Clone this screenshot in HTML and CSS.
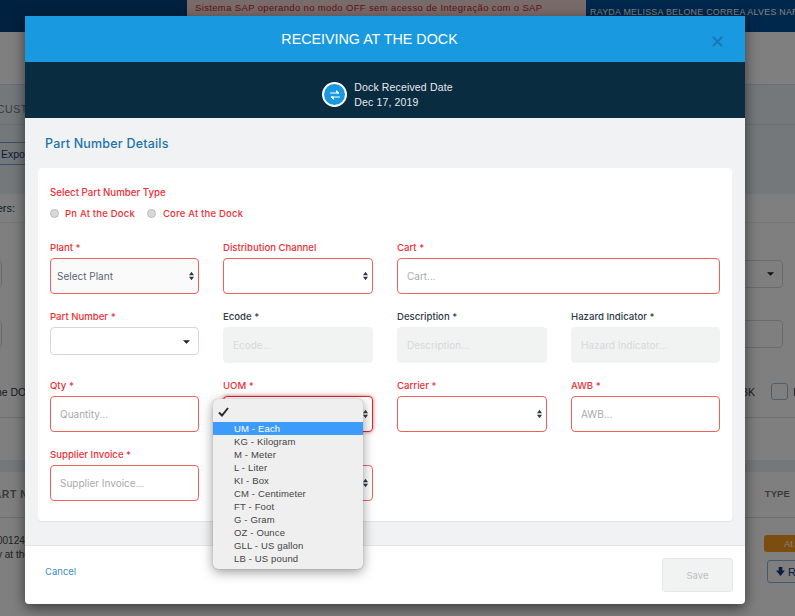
FILE: index.html
```html
<!DOCTYPE html>
<html lang="en">
<head>
  <meta charset="UTF-8" />
  <title>Receiving at the Dock</title>
  <link rel="stylesheet" href="styles.css">
</head>
<body>

  <!-- page behind the modal -->
  <div class="page">
    <div class="topbar">
      <div class="topbar-left"></div>
      <div class="topbar-alert">Sistema SAP operando no modo OFF sem acesso de Integração com o SAP</div>
      <div class="topbar-user">RAYDA MELISSA BELONE CORREA ALVES NARDI</div>
    </div>
    <div class="page-gap"></div>
    <div class="tabs">CUSTOMER</div>
    <div class="actions"><span class="export-btn">Export</span></div>
    <div class="filter-title">Filters:</div>
    <div class="filters">
      <div class="filter-row filter-row-first">
        <span class="filter-box filter-box-left"></span>
        <span class="filter-box filter-box-right">
          <svg class="caret-down" viewBox="0 0 8 4"><path d="M0 0h8L4 4z" /></svg>
        </span>
      </div>
      <div class="filter-row filter-row-second">
        <span class="filter-box filter-box-left"></span>
        <span class="filter-box filter-box-right"></span>
      </div>
      <div class="filter-row filter-row-third">
        <span class="filter-text">the DOCK</span>
        <span class="filter-check">
          <span class="filter-text">BK</span>
          <span class="checkbox"></span>
          <span class="filter-text">I</span>
        </span>
      </div>
    </div>
    <div class="band"></div>
    <div class="table-head">
      <span class="head-part">PART N</span>
      <span class="head-type">TYPE</span>
    </div>
    <div class="table-row">
      <div class="row-text">
        <div>00124</div>
        <div>y at the</div>
      </div>
      <div class="row-side">
        <span class="status">At the</span>
        <span class="receive-btn">
          <svg class="receive-icon" viewBox="0 0 10 10"><path d="M3 0h4v4h3L5 10 0 4h3z" /></svg>Receive
        </span>
      </div>
    </div>
  </div>

  <div class="backdrop"></div>

  <div class="modal">
    <div class="modal-header">
      <h1>RECEIVING AT THE DOCK</h1>
      <svg class="close-icon" viewBox="0 0 11 11"><path d="M1 1l9 9M10 1l-9 9" /></svg>
    </div>

    <div class="modal-info">
      <span class="info-icon">
        <svg viewBox="0 0 12 10"><path d="M1 3h9M7.500 .8L10 3H7.500zM11 7H2M4.500 9.200L2 7h2.500z" /></svg>
      </span>
      <div class="info-text">
        <div>Dock Received Date</div>
        <div>Dec 17, 2019</div>
      </div>
    </div>

    <div class="modal-body">
      <h2>Part Number Details</h2>
      <div class="card">
        <div class="type-label">Select Part Number Type</div>
        <div class="radios">
          <span class="radio"></span><span class="radio-label">Pn At the Dock</span>
          <span class="radio"></span><span class="radio-label">Core At the Dock</span>
        </div>

        <div class="form-grid">
          <div class="field">
            <div class="label error">Plant *</div>
            <div class="control invalid select-grey">Select Plant<svg class="updown" viewBox="0 0 6 10"><path d="M3 0l3 4H0zM3 10L0 6h6z" /></svg></div>
          </div>
          <div class="field">
            <div class="label error">Distribution Channel</div>
            <div class="control invalid"><svg class="updown" viewBox="0 0 6 10"><path d="M3 0l3 4H0zM3 10L0 6h6z" /></svg></div>
          </div>
          <div class="field field-wide">
            <div class="label error">Cart *</div>
            <div class="control invalid placeholder">Cart...</div>
          </div>

          <div class="field">
            <div class="label error">Part Number *</div>
            <div class="control control-short"><svg class="caret-down" viewBox="0 0 8 4"><path d="M0 0h8L4 4z" /></svg></div>
          </div>
          <div class="field">
            <div class="label">Ecode *</div>
            <div class="control disabled">Ecode...</div>
          </div>
          <div class="field">
            <div class="label">Description *</div>
            <div class="control disabled">Description...</div>
          </div>
          <div class="field">
            <div class="label">Hazard Indicator *</div>
            <div class="control disabled">Hazard Indicator...</div>
          </div>

          <div class="field">
            <div class="label error">Qty *</div>
            <div class="control invalid placeholder">Quantity...</div>
          </div>
          <div class="field">
            <div class="label error">UOM *</div>
            <div class="control invalid focused"><svg class="updown" viewBox="0 0 6 10"><path d="M3 0l3 4H0zM3 10L0 6h6z" /></svg></div>
            <ul class="menu">
              <li class="menu-check"><svg viewBox="0 0 11 10"><path d="M1 5.500l3 3L10 1" /></svg></li>
              <li class="active">UM - Each</li>
              <li>KG - Kilogram</li>
              <li>M - Meter</li>
              <li>L - Liter</li>
              <li>KI - Box</li>
              <li>CM - Centimeter</li>
              <li>FT - Foot</li>
              <li>G - Gram</li>
              <li>OZ - Ounce</li>
              <li>GLL - US gallon</li>
              <li>LB - US pound</li>
            </ul>
          </div>
          <div class="field">
            <div class="label error">Carrier *</div>
            <div class="control invalid"><svg class="updown" viewBox="0 0 6 10"><path d="M3 0l3 4H0zM3 10L0 6h6z" /></svg></div>
          </div>
          <div class="field">
            <div class="label error">AWB *</div>
            <div class="control invalid placeholder">AWB...</div>
          </div>

          <div class="field">
            <div class="label error">Supplier Invoice *</div>
            <div class="control invalid placeholder">Supplier Invoice...</div>
          </div>
          <div class="field">
            <div class="label error">&nbsp;</div>
            <div class="control invalid"><svg class="updown" viewBox="0 0 6 10"><path d="M3 0l3 4H0zM3 10L0 6h6z" /></svg></div>
          </div>
        </div>
      </div>
    </div>

    <div class="modal-footer">
      <a class="cancel">Cancel</a>
      <span class="save-btn">Save</span>
    </div>
  </div>

</body>
</html>
```

FILE: styles.css
```css
* {
  box-sizing: border-box;
}

html, body {
  margin: 0;
  height: 616px;
  overflow: hidden;
}

body {
  font-family: "Liberation Sans", Arial, sans-serif;
  background: #fff;
  color: #2e3a46;
  position: relative;
}

/* background page */
.page {
  height: 616px;
  overflow: hidden;
}

.topbar {
  display: flex;
  height: 32px;
  background: #005099;
}

.topbar-left {
  width: 187px;
  background: #00427e;
}

.topbar-alert {
  width: 399px;
  background: #f5d6d6;
  color: #c2262e;
  font-size: 9.500px;
  letter-spacing: .35px;
  padding: 2px 0 0 8px;
  white-space: nowrap;
}

.topbar-user {
  flex: 1;
  color: #fff;
  font-size: 8.800px;
  letter-spacing: .3px;
  padding: 7px 0 0 4px;
  white-space: nowrap;
  overflow: hidden;
}

.page-gap {
  height: 52px;
}

.tabs {
  height: 41px;
  background: #e9f1f5;
  border-top: 1px solid #d4dce2;
  border-bottom: 1px solid #d4dce2;
  color: #777;
  font-size: 10.500px;
  letter-spacing: .5px;
  padding: 18px 0 0 0;
  text-indent: -3px;
}

.actions {
  height: 69px;
  background: #e9f1f5;
  padding-top: 17px;
}

.export-btn {
  display: block;
  width: 90px;
  height: 23px;
  margin-left: -55px;
  padding: 5px 0 0 55px;
  border: 1px solid #7c9fd0;
  border-radius: 3px;
  color: #123a7c;
  font-size: 10.500px;
}

.filter-title {
  height: 29px;
  border-bottom: 1px solid #eee;
  font-size: 11px;
  padding-top: 8px;
  text-indent: -18px;
}

.filters {
  height: 195px;
  border-bottom: 1px solid #ddd;
}

.filter-row {
  display: flex;
  justify-content: space-between;
  align-items: center;
}

.filter-row-first {
  padding-top: 37px;
}

.filter-row-second {
  padding-top: 32px;
}

.filter-row-third {
  padding-top: 35px;
}

.filter-box {
  display: block;
  height: 28px;
  border: 1px solid #d3d8de;
  border-radius: 4px;
  position: relative;
}

.filter-box-left {
  width: 30px;
  margin-left: -28px;
}

.filter-box-right {
  width: 60px;
  margin-right: 12px;
}

.filter-box .caret-down {
  right: 8px;
  top: 11px;
}

.filter-text {
  font-size: 10.500px;
  white-space: nowrap;
}

.filter-row-third > .filter-text {
  margin-left: -7px;
}

.filter-check {
  display: flex;
  align-items: center;
  margin-right: -1px;
}

.checkbox {
  width: 17px;
  height: 17px;
  margin: 0 5px 0 16px;
  border: 1px solid #a9bacd;
  border-radius: 3px;
}

.band {
  height: 42px;
  position: relative;
}

.band::after {
  content: "";
  position: absolute;
  left: 0;
  right: 0;
  bottom: -12px;
  height: 12px;
  background: #e9f1f5;
}

.table-head {
  display: flex;
  justify-content: space-between;
  height: 58px;
  padding-top: 28px;
  border-bottom: 1px solid #ddd;
  color: #777;
  font-size: 10.500px;
  font-weight: bold;
  letter-spacing: .5px;
}

.head-part {
  margin-left: -13px;
}

.head-type {
  margin-right: 5px;
  font-size: 9.500px;
  letter-spacing: .1px;
}

.table-row {
  display: flex;
  justify-content: space-between;
}

.row-text {
  font-size: 10px;
  line-height: 14px;
  padding-top: 16px;
  margin-left: -3px;
  color: #444;
}

.row-side {
  width: 31px;
  padding-top: 17px;
  overflow: hidden;
}

.status {
  display: block;
  width: 60px;
  height: 17px;
  border-radius: 3px;
  background: #f79a1f;
  color: #fff;
  font-size: 9.500px;
  padding: 3px 0 0 20px;
  white-space: nowrap;
}

.receive-btn {
  display: block;
  width: 60px;
  height: 23px;
  margin: 8px 0 0 3px;
  padding: 5px 0 0 8px;
  border: 1px solid #8fb0db;
  border-radius: 3px;
  color: #0f3d88;
  font-size: 11px;
  white-space: nowrap;
}

.receive-icon {
  width: 9px;
  height: 9px;
  margin-right: 3px;
  fill: #0f3d88;
}

.backdrop {
  position: absolute;
  inset: 0;
  background: rgba(0, 0, 0, .5);
}

/* modal */
.modal {
  position: absolute;
  left: 25px;
  top: 16px;
  width: 720px;
  height: 588px;
  background: #fff;
  border-radius: 0 0 4px 4px;
  box-shadow: 0 4px 14px rgba(0, 0, 0, .55);
  display: flex;
  flex-direction: column;
}

.modal-header {
  height: 46px;
  flex: none;
  background: #1899e0;
  display: flex;
  align-items: center;
  justify-content: center;
  padding-right: 31px;
  position: relative;
}

.modal-header h1 {
  margin: 0;
  color: #fff;
  font-size: 14.300px;
  font-weight: normal;
}

.close-icon {
  position: absolute;
  right: 22px;
  top: 20px;
  width: 11px;
  height: 11px;
  stroke: #1878b4;
  stroke-width: 2;
  fill: none;
}

.modal-info {
  height: 56px;
  flex: none;
  background: #0a2c40;
  display: flex;
  align-items: center;
  justify-content: center;
  gap: 7px;
  color: #e6ebee;
  font-size: 10.500px;
  letter-spacing: .15px;
  padding: 9px 0 0 5px;
}

.info-icon {
  width: 25px;
  height: 25px;
  border-radius: 50%;
  border: 2px solid #fff;
  background: #1899e0;
  display: flex;
  align-items: center;
  justify-content: center;
}

.info-icon svg {
  width: 12px;
  height: 10px;
  stroke: #fff;
  stroke-width: 1;
  fill: #fff;
}

.info-text {
  line-height: 15px;
}

.modal-body {
  flex: 1;
  background: #f1f2f4;
  padding: 0 13px;
}

.modal-body h2 {
  margin: 0;
  padding: 18px 0 0 7px;
  height: 50px;
  color: #1a74a8;
  font-family: Inter, "Liberation Sans", sans-serif;
  font-size: 12.500px;
  letter-spacing: .2px;
  font-weight: 500;
}

.card {
  height: 353px;
  background: #fff;
  border-radius: 4px;
  box-shadow: 0 1px 1px rgba(0, 0, 0, .06);
  padding: 18px 12px 0;
  font-family: Inter, "Liberation Sans", sans-serif;
}

.type-label {
  color: #ee2e34;
  font-size: 9.700px;
  font-weight: 500;
  line-height: 14px;
}

.radios {
  display: flex;
  align-items: center;
  height: 14px;
  margin-top: 6px;
  color: #ee2e34;
  font-size: 9.500px;
  letter-spacing: .2px;
  font-weight: 500;
}

.radio {
  width: 9px;
  height: 9px;
  border-radius: 50%;
  background: #d8d8d8;
  border: 1px solid #bbb;
  margin-right: 7px;
}

.radio-label {
  margin-right: 12px;
}

.radio:first-child {
  margin-right: 6px;
}

.form-grid {
  display: grid;
  grid-template-columns: 149px 150px 150px 149px;
  column-gap: 24px;
  margin-top: 21px;
}

.field {
  position: relative;
  height: 69px;
}

.field-wide {
  grid-column: span 2;
}

.label {
  font-size: 9.600px;
  font-weight: 500;
  line-height: 14px;
  margin-bottom: 3px;
  color: #2e3a46;
}

.error {
  color: #ee2e34;
}

.control {
  height: 36px;
  border-radius: 4px;
  border: 1px solid #d3d8e4;
  background: #fff;
  font-size: 10px;
  padding: 0 9px;
  display: flex;
  align-items: center;
  position: relative;
}

.control-short {
  height: 28px;
}

.invalid {
  border-color: #f0625c;
}

.select-grey {
  background: #fafafb;
  color: #5a6675;
  padding-left: 6px;
}

.placeholder {
  color: #a9a9a9;
}

.disabled {
  background: #f1f2f2;
  border-color: #f1f2f2;
  color: #d6d8da;
}

.focused {
  border-color: #d8242c;
  box-shadow: 0 0 4px rgba(216, 36, 44, .6);
}

.updown {
  position: absolute;
  right: 4px;
  top: 12px;
  width: 5px;
  height: 10px;
  fill: #2e3a46;
}

.caret-down {
  position: absolute;
  right: 8px;
  top: 12px;
  width: 7px;
  height: 4px;
  fill: #222;
}

/* open select menu */
.menu {
  list-style: none;
  margin: 0;
  padding: 0 0 4px;
  position: absolute;
  left: -10px;
  top: 20px;
  width: 150px;
  height: 170px;
  background: #efefef;
  border-radius: 5px;
  box-shadow: 0 3px 12px rgba(0, 0, 0, .4), 0 0 1px rgba(0, 0, 0, .4);
  font-family: "Liberation Sans", Arial, sans-serif;
  font-size: 9.500px;
  letter-spacing: .15px;
  color: #444;
  z-index: 2;
}

.menu li {
  height: 13px;
  line-height: 13px;
  padding-left: 21px;
}

.menu .menu-check {
  height: 23px;
  padding: 8px 0 0 5px;
}

.menu-check svg {
  display: block;
  width: 11px;
  height: 10px;
  stroke: #2b2b2b;
  stroke-width: 2;
  fill: none;
}

.menu .active {
  background: #3d9bfb;
  color: #fff;
}

.modal-footer {
  height: 59px;
  flex: none;
  border-top: 1px solid #e3e5e7;
  display: flex;
  justify-content: space-between;
  padding: 12px 12px 0 20px;
  font-family: Inter, "Liberation Sans", sans-serif;
  font-size: 9.500px;
}

.cancel {
  color: #3f8fc6;
  padding-top: 8px;
}

.save-btn {
  width: 71px;
  height: 34px;
  border: 1px solid #e6e8e8;
  border-radius: 3px;
  background: #f1f2f2;
  color: #bcc0c4;
  display: flex;
  align-items: center;
  justify-content: center;
}
```
